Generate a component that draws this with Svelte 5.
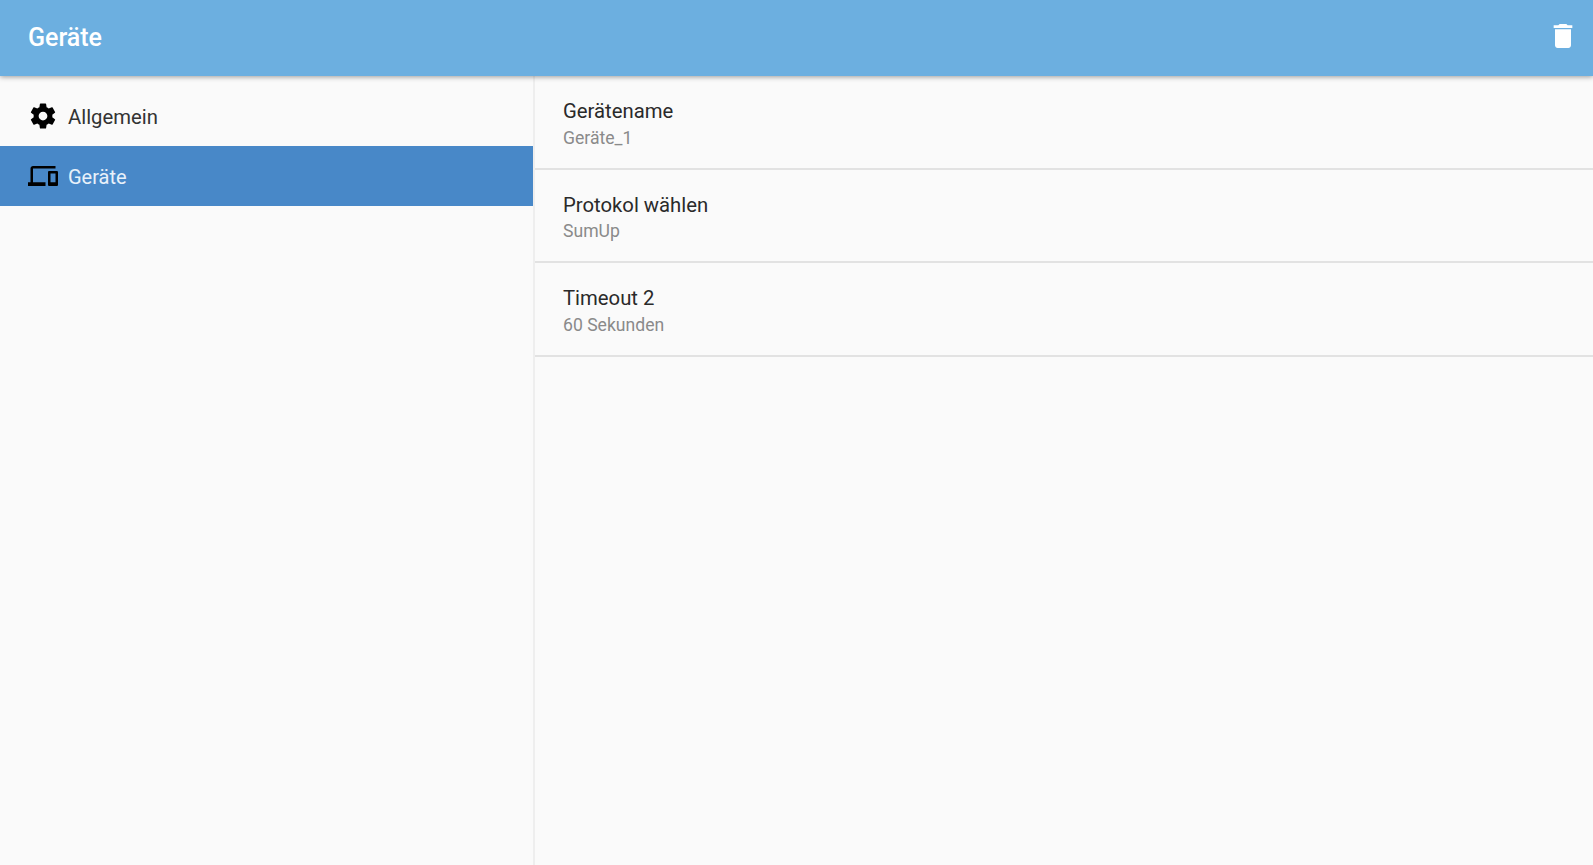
<script>
  const rows = [
    { title: 'Gerätename', sub: 'Geräte_1' },
    { title: 'Protokol wählen', sub: 'SumUp' },
    { title: 'Timeout 2', sub: '60 Sekunden' }
  ];
</script>

<div class="app">
  <header class="bar">
    <h1>Geräte</h1>
    <svg class="trash" viewBox="0 0 24 24" aria-hidden="true"><path d="M6 19c0 1.1.9 2 2 2h8c1.100 0 2-.9 2-2V7H6v12zM19 4h-3.500l-1-1h-5l-1 1H5v2h14V4z"/></svg>
  </header>
  <div class="body">
    <nav class="side">
      <div class="item">
        <svg class="ic" viewBox="0 0 24 24" aria-hidden="true"><path d="M19.430 12.980c.04-.32.07-.64.07-.98s-.03-.66-.07-.98l2.110-1.650c.19-.15.24-.42.12-.64l-2-3.460c-.12-.22-.39-.3-.61-.22l-2.490 1c-.52-.4-1.080-.73-1.690-.98l-.38-2.650C14.460 2.180 14.250 2 14 2h-4c-.25 0-.46.18-.49.42l-.38 2.650c-.61.25-1.170.59-1.690.98l-2.490-1c-.23-.09-.49 0-.61.22l-2 3.460c-.13.22-.07.49.12.64l2.110 1.650c-.04.32-.07.65-.07.98s.03.66.07.98l-2.110 1.650c-.19.15-.24.42-.12.64l2 3.460c.12.22.39.3.61.22l2.490-1c.52.4 1.080.73 1.690.98l.38 2.650c.03.24.24.42.49.42h4c.25 0 .46-.18.49-.42l.38-2.650c.61-.25 1.170-.59 1.690-.98l2.490 1c.23.09.49 0 .61-.22l2-3.460c.12-.22.07-.49-.12-.64l-2.110-1.650zM12 15.500c-1.930 0-3.500-1.570-3.500-3.500s1.570-3.500 3.500-3.500 3.500 1.570 3.500 3.500-1.570 3.500-3.500 3.500z"/></svg>
        <span>Allgemein</span>
      </div>
      <div class="item active">
        <svg class="ic" viewBox="0 0 24 24" aria-hidden="true"><path d="M4 6h18V4H4c-1.100 0-2 .9-2 2v11H0v3h14v-3H4V6zm19 2h-6c-.55 0-1 .45-1 1v10c0 .55.45 1 1 1h6c.55 0 1-.45 1-1V9c0-.55-.45-1-1-1zm-1 9h-4v-7h4v7z"/></svg>
        <span>Geräte</span>
      </div>
    </nav>
    <main class="list">
      {#each rows as r}
        <div class="row">
          <div class="title">{r.title}</div>
          <div class="sub">{r.sub}</div>
        </div>
      {/each}
    </main>
  </div>
</div>

<style>
  :global(body) { margin: 0; }
  .app {
    width: 1593px;
    height: 865px;
    display: flex;
    flex-direction: column;
    background: #fafafa;
    font-family: Roboto, sans-serif;
    overflow: hidden;
  }
  .bar {
    position: relative;
    z-index: 1;
    height: 76px;
    flex: none;
    box-sizing: border-box;
    background: #6cafe0;
    display: flex;
    align-items: center;
    justify-content: space-between;
    padding: 0 14px 4px 28px;
    box-shadow: 0 1px 5px rgba(0,0,0,.38);
  }
  h1 {
    margin: 2px 0 0;
    font-size: 25px;
    font-weight: 500;
    color: #fff;
  }
  .trash { width: 32px; height: 32px; fill: #fff; }
  .body { flex: 1; display: flex; min-height: 0; }
  .side {
    width: 535px;
    flex: none;
    box-sizing: border-box;
    padding-top: 10px;
    border-right: 2px solid #eeeeee;
  }
  .item {
    height: 60px;
    display: flex;
    align-items: center;
    padding-left: 28px;
    gap: 10px;
    font-size: 20.3px;
    color: #333;
  }
  .item span { padding-top: 2px; }
  .item.active { background: #4888c8; color: #e8f1fa; font-size: 20px; }
  .ic { width: 30px; height: 30px; fill: #000; flex: none; }
  .list { flex: 1; min-width: 0; }
  .row {
    box-sizing: border-box;
    height: 93.6px;
    border-bottom: 2px solid #e2e2e2;
    padding: 3px 0 0 28px;
    display: flex;
    flex-direction: column;
    justify-content: center;
    gap: 4.500px;
  }
  .title { font-size: 20.3px; color: #2a2a2a; }
  .sub { font-size: 17.6px; color: #8a8a8a; }
</style>
